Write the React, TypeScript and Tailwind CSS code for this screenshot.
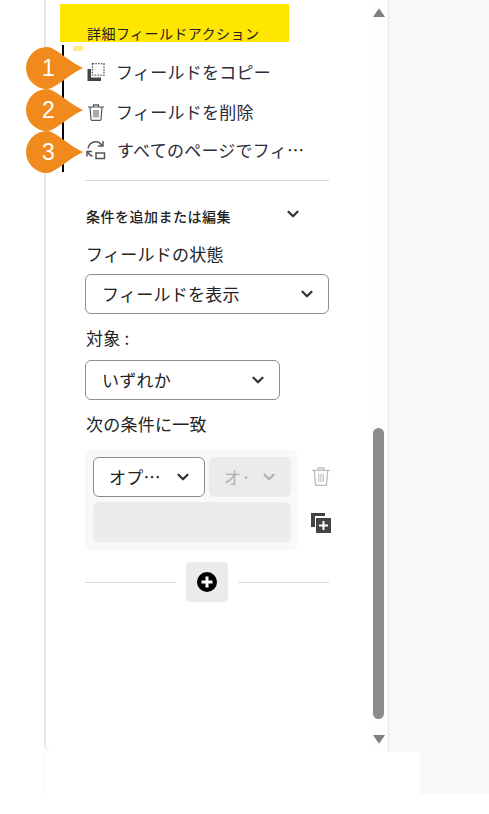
import { ChevronDown } from 'lucide-react';

const font = { fontFamily: '"Noto Sans CJK JP", "Liberation Sans", sans-serif' };

function CopyFieldIcon() {
  return (
    <svg width="18" height="18" viewBox="0 0 18 18" className="shrink-0">
      <path d="M0.500 6h3.500v8.500h10V18H0.500z" fill="#444" />
      <rect x="5.500" y="0.700" width="11.500" height="11.500" fill="none" stroke="#555" strokeWidth="1.300" strokeDasharray="1.500 1.300" />
    </svg>
  );
}

function TrashIcon({ color = '#555', size = 18 }: { color?: string; size?: number }) {
  return (
    <svg width={size} height={size} viewBox="0 0 18 18" fill="none" stroke={color} strokeWidth="1.200" className="shrink-0">
      <path d="M1 4h16M6.500 4V1.800h5V4" />
      <path d="M3 4l1 12.500a1 1 0 0 0 1 .9h8a1 1 0 0 0 1-.9L15 4" />
      <path d="M7 7v7.500M9 7v7.500M11 7v7.500" strokeWidth="1" />
    </svg>
  );
}

function SyncIcon() {
  return (
    <svg width="20" height="20" viewBox="0 0 20 20" fill="none" stroke="#555" strokeWidth="1.500" className="shrink-0">
      <path d="M2 8.500C2.500 4.500 6 1.800 9.500 1.800c2.800 0 5 1.400 6.500 3.700" />
      <path d="M17 1v5h-5" />
      <path d="M1 16.500v-5h5" />
      <path d="M1.500 11.500c.8 2.200 2.500 4 5 4.800" />
      <rect x="10" y="13" width="8.500" height="5.500" />
    </svg>
  );
}

function Pin({ n, top }: { n: number; top: string }) {
  return (
    <div className={`absolute left-[26px] w-[58px] h-[42px] ${top}`}>
      <svg width="58" height="42" viewBox="0 0 58 42" className="absolute inset-0">
        <path d="M21 0C29 0 42 14 57 21C42 28 29 42 21 42A21 21 0 0 1 21 0Z" fill="#f18a1d" />
      </svg>
      <span className="absolute left-0 top-0 w-[45px] h-[42px] flex items-center justify-center text-[23px] text-white font-['Liberation_Sans']">
        {n}
      </span>
    </div>
  );
}

function Select({ label, className, disabled }: { label: string; className: string; disabled?: boolean }) {
  return (
    <div
      className={`h-10 shrink-0 rounded-md flex items-center justify-between ${
        disabled ? 'bg-[#ebebeb] text-[#b0b0b0]' : 'bg-white border border-[#8c8c8c] text-[#222]'
      } ${className}`}
    >
      <span className="text-[17px] tracking-[0.250px] whitespace-nowrap">{label}</span>
      <ChevronDown size={18} strokeWidth={3} color={disabled ? '#b0b0b0' : '#333'} />
    </div>
  );
}

export default function App() {
  return (
    <div className="relative w-[489px] h-[814px] bg-white overflow-hidden" style={font}>
      <div className="flex h-[752px]">
        <div className="w-[44px] shrink-0" />
        <div className="w-[345px] shrink-0 flex border-l-2 border-r border-[#e8e8e8] rounded-bl-lg">
          <div className="w-[324px] shrink-0 pl-[39px]">
            <div className="mt-[4px] -ml-[25px] w-[229px] h-[38px] bg-[#ffe600] pl-[27px] pt-[20px] text-[14px] leading-[18px] tracking-[0.450px] text-[#222] whitespace-nowrap">
              詳細フィールドアクション
            </div>
            <div className="h-[10px]" />
            <div className="flex flex-col text-[17px] tracking-[0.250px] text-[#2b2b3a]">
              <div className="h-10 flex items-center gap-[11px] pl-[2px]">
                <CopyFieldIcon />
                <span>フィールドをコピー</span>
              </div>
              <div className="h-10 flex items-center gap-[11px] pl-[2px]">
                <TrashIcon />
                <span>フィールドを削除</span>
              </div>
              <div className="h-[36px] flex items-center gap-[11px] pl-[1px]">
                <SyncIcon />
                <span className="whitespace-nowrap">すべてのページでフィ…</span>
              </div>
            </div>
            <div className="mt-[12px] w-[244px] border-t border-[#d9d9d9]" />

            <div className="mt-[25px] w-[216px] flex justify-between items-start pl-[1px]">
              <span className="text-[14px] leading-[20px] tracking-[0.500px] font-medium text-[#222] whitespace-nowrap">条件を追加または編集</span>
            </div>
            <div className="mt-[16px] pl-[1px] text-[17px] leading-6 tracking-[0.250px] text-[#222]">フィールドの状態</div>
            <Select label="フィールドを表示" className="mt-[8px] w-[244px] pl-4 pr-[12px]" />
            <div className="mt-[12px] pl-[1px] text-[17px] leading-6 tracking-[0.250px] text-[#222]">対象 :</div>
            <Select label="いずれか" className="mt-[10px] w-[195px] pl-4 pr-[12px]" />
            <div className="mt-[12px] pl-[1px] text-[17px] leading-6 tracking-[0.250px] text-[#222]">次の条件に一致</div>

            <div className="mt-[14px] flex items-start">
              <div className="w-[213px] h-[100px] bg-[#f8f8f8] rounded-lg pl-2 pt-[7px]">
                <div className="flex gap-[4px]">
                  <Select label="オプ…" className="w-[112px] pl-[15px] pr-[12px]" />
                  <Select label="オ·" disabled className="w-[82px] pl-[15px] pr-[13px]" />
                </div>
                <div className="mt-[5px] w-[198px] h-10 bg-[#ebebeb] rounded-md" />
              </div>
              <div className="ml-[13px] flex flex-col items-center pt-[16px]">
                <TrashIcon color="#bdbdbd" size={20} />
                <svg width="20" height="20" viewBox="0 0 20 20" className="mt-[27px]">
                  <path d="M0 0h14v3H4v11H0z" fill="#444" />
                  <rect x="5" y="5" width="15" height="15" fill="#444" />
                  <path d="M12.500 8v9M8 12.500h9" stroke="#fff" strokeWidth="2" />
                </svg>
              </div>
            </div>

            <div className="mt-[12px] w-[244px] flex items-center">
              <div className="w-[91px] border-t border-[#d9d9d9]" />
              <div className="ml-[10px] w-[42px] h-10 bg-[#ebebeb] rounded flex items-center justify-center">
                <svg width="20" height="20" viewBox="0 0 20 20">
                  <circle cx="10" cy="10" r="10" fill="#000" />
                  <path d="M10 4.500v11M4.500 10h11" stroke="#fff" strokeWidth="3" />
                </svg>
              </div>
              <div className="ml-[10px] w-[91px] border-t border-[#d9d9d9]" />
            </div>
          </div>

          <div className="w-[18px] shrink-0 bg-[#fdfdfd] flex flex-col items-center">
            <svg width="12" height="9" viewBox="0 0 12 9" className="mt-[8px]">
              <path d="M6 0.300L12 9H0Z" fill="#808080" />
            </svg>
            <div className="mt-[411px] mr-[1px] w-[11px] h-[291px] bg-[#8c8c8c] rounded-full" />
            <svg width="12" height="9" viewBox="0 0 12 9" className="mt-[16px]">
              <path d="M6 8.700L12 0H0Z" fill="#808080" />
            </svg>
          </div>
        </div>
        <div className="flex-1 bg-[#f8f8f8]" />
      </div>

      <div className="flex h-[42px]">
        <div className="w-[43px] shrink-0" />
        <div className="w-[377px] shrink-0 border-l border-[#f6f6f6]" />
        <div className="flex-1 bg-[#f8f8f8]" />
      </div>

      {/* annotations on top of the panel */}
      <div className="absolute left-[62px] top-[45px] w-[2px] h-[127px] bg-black" />
      <div className="absolute left-[73px] top-[46px] w-[10px] h-[5px] bg-[#ffee80]" />
      <div className="absolute left-[284px] top-[205px]">
        <ChevronDown size={18} strokeWidth={3} color="#333" />
      </div>
      <div className="absolute left-[419px] top-[175px] w-px h-[577px] bg-[#fcfcfc]" />
      <Pin n={1} top="top-[47px]" />
      <Pin n={2} top="top-[89px]" />
      <Pin n={3} top="top-[131px]" />
    </div>
  );
}
